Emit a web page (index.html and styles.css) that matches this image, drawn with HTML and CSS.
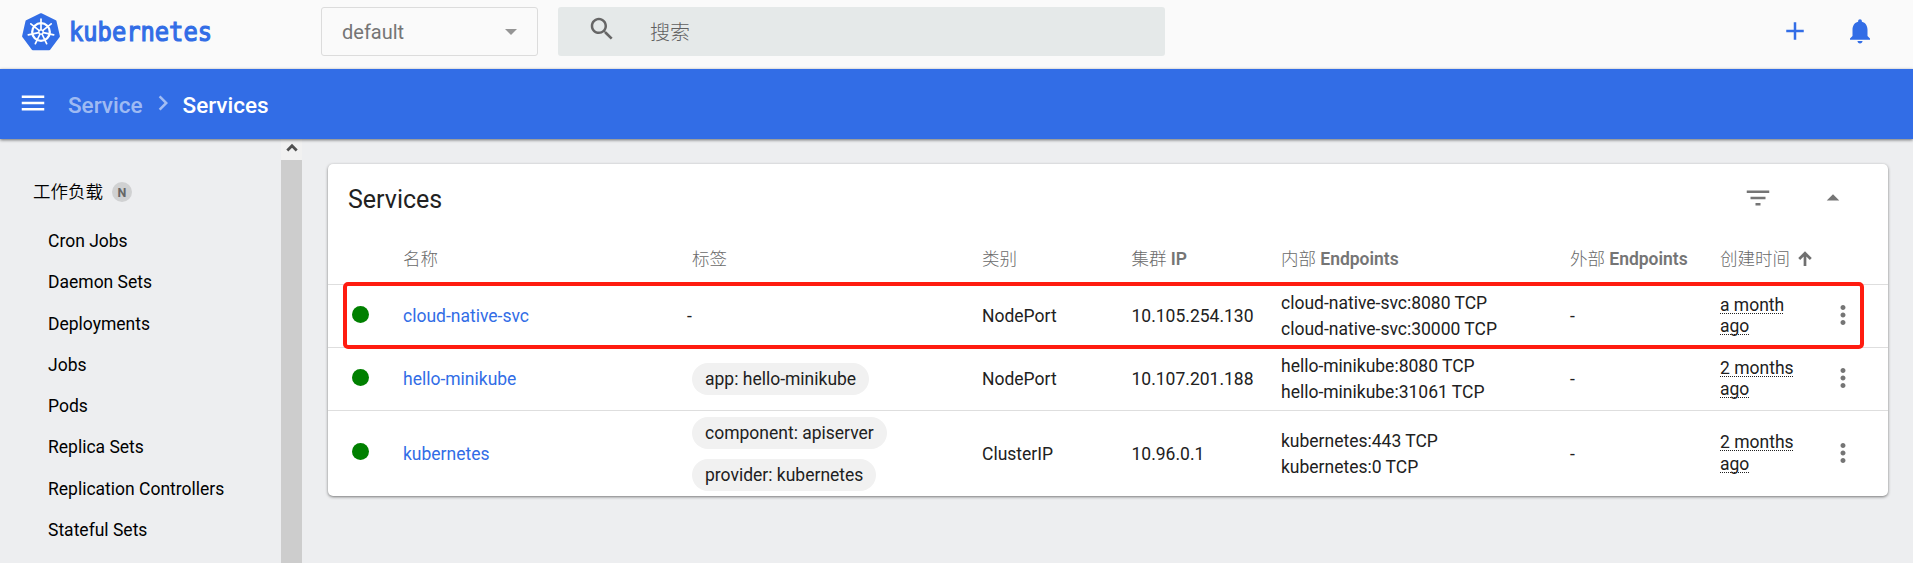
FILE: index.html
```html
<!DOCTYPE html>
<html lang="zh-CN">
<head>
<meta charset="utf-8">
<title>Services - Kubernetes Dashboard</title>
<link rel="stylesheet" href="styles.css">
</head>
<body>
<svg class="defs" width="0" height="0">
  <symbol id="more" viewBox="0 0 24 24"><path d="M12 8c1.1 0 2-.9 2-2s-.9-2-2-2-2 .9-2 2 .9 2 2 2zm0 2c-1.1 0-2 .9-2 2s.9 2 2 2 2-.9 2-2-.9-2-2-2zm0 6c-1.1 0-2 .9-2 2s.9 2 2 2 2-.9 2-2-.9-2-2-2z"/></symbol>
</svg>
<header class="topbar">
  <a class="brand">
    <svg class="brand-mark" viewBox="-20 -20 40 40" width="40" height="40">
      <path d="M0-17.6L14.3-10.7 17.7 4.2 8.2 17H-8.2L-17.7 4.2-14.3-10.7z" fill="#326de6" stroke="#326de6" stroke-width="2.4" stroke-linejoin="round"/>
      <circle r="8.8" fill="none" stroke="#fff" stroke-width="2.3"/>
      <g stroke="#fff" stroke-width="1.7" stroke-linecap="round">
        <path d="M0-2.5V-13"/>
        <path d="M0-2.5V-13" transform="rotate(51.43)"/>
        <path d="M0-2.5V-13" transform="rotate(102.86)"/>
        <path d="M0-2.5V-13" transform="rotate(154.29)"/>
        <path d="M0-2.5V-13" transform="rotate(205.71)"/>
        <path d="M0-2.5V-13" transform="rotate(257.14)"/>
        <path d="M0-2.5V-13" transform="rotate(308.57)"/>
      </g>
      <circle r="2.2" fill="none" stroke="#fff" stroke-width="1.3"/>
    </svg>
    <svg class="brand-name" width="152" height="44"><text x="0" y="29" textLength="143" lengthAdjust="spacingAndGlyphs">kubernetes</text></svg>
  </a>
  <div class="namespace"><span>default</span><i class="caret"></i></div>
  <div class="search">
    <svg class="icon" viewBox="0 0 24 24"><path d="M15.5 14h-.79l-.28-.27C15.41 12.59 16 11.11 16 9.5 16 5.91 13.09 3 9.5 3S3 5.91 3 9.5 5.91 16 9.5 16c1.61 0 3.09-.59 4.23-1.57l.27.28v.79l5 4.99L20.49 19l-4.99-5zm-6 0C7.01 14 5 11.99 5 9.5S7.01 5 9.5 5 14 7.01 14 9.5 11.99 14 9.5 14z"/></svg>
    <span>搜索</span>
  </div>
  <div class="actions">
    <svg class="icon" viewBox="0 0 24 24"><path d="M19 13h-6v6h-2v-6H5v-2h6V5h2v6h6v2z"/></svg>
    <svg class="icon" viewBox="0 0 24 24"><path d="M12 22c1.1 0 2-.9 2-2h-4c0 1.1.89 2 2 2zm6-6v-5c0-3.07-1.64-5.64-4.5-6.32V4c0-.83-.67-1.5-1.5-1.5s-1.5.67-1.5 1.5v.68C7.63 5.36 6 7.92 6 11v5l-2 2v1h16v-1l-2-2z"/></svg>
  </div>
</header>
<div class="toolbar">
  <svg class="icon" viewBox="0 0 24 24"><path d="M3 18h18v-2H3v2zm0-5h18v-2H3v2zm0-7v2h18V6H3z"/></svg>
  <span class="crumb parent">Service</span>
  <svg class="icon chevron" viewBox="0 0 24 24"><path d="M10 6L8.59 7.41 13.17 12l-4.58 4.59L10 18l6-6z"/></svg>
  <span class="crumb">Services</span>
</div>
<div class="body">
  <nav class="sidebar">
    <div class="nav">
      <div class="category">工作负载<span class="badge">N</span></div>
      <a>Cron Jobs</a>
      <a>Daemon Sets</a>
      <a>Deployments</a>
      <a>Jobs</a>
      <a>Pods</a>
      <a>Replica Sets</a>
      <a>Replication Controllers</a>
      <a>Stateful Sets</a>
    </div>
    <div class="scrollbar">
      <div class="scroll-up"><svg width="12" height="9" viewBox="0 0 12 9"><path d="M1.3 7.5L6 2.8l4.7 4.7" fill="none" stroke="#505050" stroke-width="2.8"/></svg></div>
      <div class="thumb"></div>
    </div>
  </nav>
  <main class="card">
    <div class="card-head">
      <h1>Services</h1>
      <svg class="icon" viewBox="0 0 24 24"><path d="M10 18h4v-2h-4v2zM3 6v2h18V6H3zm3 7h12v-2H6v2z"/></svg>
      <svg class="icon collapse" viewBox="0 0 24 24"><path d="M7 14l5-5 5 5z"/></svg>
    </div>
    <div class="row head">
      <span></span><span>名称</span><span>标签</span><span>类别</span><span>集群 <b>IP</b></span><span>内部 <b>Endpoints</b></span><span>外部 <b>Endpoints</b></span>
      <span class="sort">创建时间<svg width="14" height="16" viewBox="0 0 14 16"><path d="M7 15V2.5M1.2 8L7 2.2 12.8 8" fill="none" stroke="#707070" stroke-width="2.7"/></svg></span>
    </div>
    <div class="row selected">
      <i class="status"></i><a>cloud-native-svc</a><span class="none">-</span><span>NodePort</span><span>10.105.254.130</span>
      <span class="endpoints">cloud-native-svc:8080 TCP<br>cloud-native-svc:30000 TCP</span><span>-</span>
      <span class="age"><u>a month<br>ago</u></span><svg class="icon menu"><use href="#more"/></svg>
    </div>
    <div class="row">
      <i class="status"></i><a>hello-minikube</a><span class="chips"><b>app: hello-minikube</b></span><span>NodePort</span><span>10.107.201.188</span>
      <span class="endpoints">hello-minikube:8080 TCP<br>hello-minikube:31061 TCP</span><span>-</span>
      <span class="age"><u>2 months<br>ago</u></span><svg class="icon menu"><use href="#more"/></svg>
    </div>
    <div class="row tall">
      <i class="status"></i><a>kubernetes</a><span class="chips"><b>component: apiserver</b><b>provider: kubernetes</b></span><span>ClusterIP</span><span>10.96.0.1</span>
      <span class="endpoints">kubernetes:443 TCP<br>kubernetes:0 TCP</span><span>-</span>
      <span class="age"><u>2 months<br>ago</u></span><svg class="icon menu"><use href="#more"/></svg>
    </div>
  </main>
</div>
</body>
</html>
```
FILE: styles.css
```css
* { box-sizing: border-box; }
body {
  margin: 0;
  height: 563px;
  overflow: hidden;
  display: flex;
  flex-direction: column;
  background: #edeef0;
  color: #212121;
  font: 17.5px/26px Roboto, "Noto Sans CJK SC", sans-serif;
}
.defs { position: absolute; }
.icon { width: 30px; height: 30px; flex: none; fill: #757575; }

.topbar {
  height: 69px;
  flex: none;
  display: flex;
  align-items: flex-start;
  padding: 7px 38px 0 21px;
  background: #fafafa;
}
.brand { display: flex; width: 300px; padding-top: 5px; }
.brand-name { margin: 0 0 0 8px; overflow: visible; }
.brand-name text {
  font: 26px "DejaVu Sans Mono", monospace;
  fill: #326de6;
  stroke: #326de6;
  stroke-width: 1.2px;
}
.namespace {
  width: 217px;
  height: 49px;
  display: flex;
  align-items: center;
  justify-content: space-between;
  padding: 0 20px;
  border: 1px solid #dcdcdc;
  border-radius: 3px;
  color: #757575;
  font-size: 20px;
}
.caret { border: 6px solid transparent; border-top-color: #959595; border-bottom: 0; }
.search {
  width: 607px;
  height: 49px;
  margin-left: 20px;
  padding: 7px 29px;
  display: flex;
  background: #e5e9e9;
  border-radius: 3px;
  color: #606060;
  font-size: 20px;
}
.search .icon { fill: #666; }
.search span { margin: 6px 0 0 33px; font-weight: 300; }
.actions { margin: 9px 0 0 auto; display: flex; gap: 35px; }
.actions .icon { fill: #326de6; }

.toolbar {
  height: 70px;
  flex: none;
  display: flex;
  align-items: center;
  padding: 0 18px 2px;
  background: #326de6;
  box-shadow: 0 1px 3px rgba(0, 0, 0, .55);
  z-index: 1;
}
.toolbar .icon { fill: #fff; }
.toolbar .chevron { margin: 0 5px; fill: rgba(255, 255, 255, .55); }
.crumb { color: #fff; font-size: 22.5px; font-weight: 500; padding-top: 3px; }
.parent { color: rgba(255, 255, 255, .55); margin-left: 20px; }

.body { flex: 1; display: flex; min-height: 0; align-items: flex-start; }
.sidebar { width: 302px; height: 100%; display: flex; color: #000; }
.nav { flex: 1; padding: 33px 0 0 33px; }
.category { height: 49px; line-height: 40px; display: flex; font-weight: 350; }
.badge {
  width: 20px;
  height: 20px;
  margin: 10px 0 0 9px;
  border-radius: 50%;
  background: #d0d1d2;
  color: #666;
  font-size: 12.5px;
  font-weight: 700;
  line-height: 22px;
  text-align: center;
}
.nav a { display: block; height: 41.25px; line-height: 41.25px; padding-left: 15px; }
.scrollbar { width: 21px; display: flex; flex-direction: column; background: #f1f1f1; }
.scroll-up { height: 21px; display: flex; justify-content: center; padding-top: 4px; }
.thumb { flex: 1; background: #cdcdcd; }

.card {
  width: 1560px;
  height: 332px;
  margin: 25px 0 0 26px;
  background: #fff;
  border-radius: 5px;
  box-shadow: 0 1px 3px rgba(0, 0, 0, .5);
}
.card-head { height: 70px; display: flex; align-items: center; padding: 0 40px 2px 20px; }
h1 { flex: 1; margin: 4px 0 0; font-size: 25px; font-weight: 400; }
.collapse { margin-left: 45px; }
.row {
  position: relative;
  height: 63px;
  display: grid;
  grid-template-columns: 55px 289px 290px 149.5px 149.5px 289px 150px 97px 1fr;
  align-items: center;
  padding-left: 20px;
  border-bottom: 1px solid #dedede;
}
.head { height: 51px; color: #6a6a6a; font-weight: 300; }
.head b { color: #757575; font-weight: 600; }
.sort { display: flex; align-items: center; gap: 8px; white-space: nowrap; }
.tall { height: 85px; border: 0; }
.row a { color: #326de6; }
.selected::after {
  content: "";
  position: absolute;
  inset: -3px 24px -2px 15px;
  border: 4px solid #ff1c10;
  border-radius: 5px;
}
.status { width: 17px; height: 17px; margin: -4px 0 0 4px; border-radius: 50%; background: #008000; }
.none { margin-left: -5px; }
.chips { display: flex; flex-direction: column; align-items: flex-start; gap: 10px; }
.chips b { height: 32px; line-height: 32px; padding: 0 13px; border-radius: 16px; background: #f1f1f1; font-weight: 400; }
.age { line-height: 21.3px; }
.age u { text-decoration: underline dotted 1px; text-underline-offset: 2px; text-decoration-skip-ink: none; }
.menu { margin: -2px 0 0 11px; }
```
